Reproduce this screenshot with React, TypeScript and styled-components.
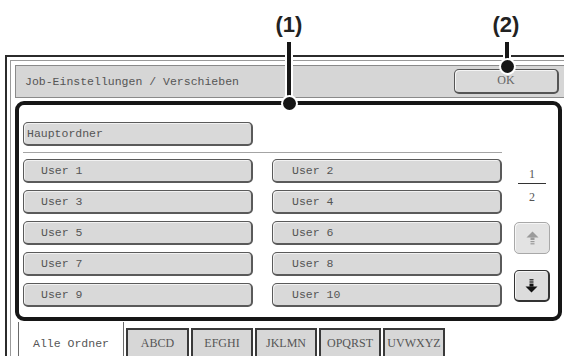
import React from "react";
import styled, { createGlobalStyle } from "styled-components";

const Global = createGlobalStyle`
  html, body { margin: 0; padding: 0; background: #fff; overflow: hidden; }
  * { box-sizing: border-box; }
`;

const MONO = `"Liberation Mono", "DejaVu Sans Mono", monospace`;
const SERIF = `"Liberation Serif", "DejaVu Serif", serif`;

const Page = styled.div`
  position: relative;
  width: 564px;
  height: 356px;
  overflow: hidden;
  background: #fff;
`;

const Frame = styled.div`
  margin: 55px 0 0 5px;
  width: 575px;
  height: 301px;
  border-top: 2px solid #2b2b2b;
  border-left: 2px solid #2b2b2b;
  padding: 3px 0 0 3px;
`;

const Inner = styled.div`
  height: 100%;
  border-top: 1px solid #9a9a9a;
  border-left: 1px solid #9a9a9a;
  padding: 4px 0 0 4px;
  display: flex;
  flex-direction: column;
`;

const TitleBar = styled.div`
  width: 551px;
  height: 33px;
  flex: none;
  background: #d6d6d6;
  border: 1px solid #8a8a8a;
  display: flex;
  align-items: center;
  justify-content: space-between;
  padding: 0 6px 0 9px;
`;

const TitleText = styled.span`
  font-family: ${MONO};
  font-size: 11.5px;
  color: #555;
`;

const OkButton = styled.div`
  width: 105px;
  height: 25px;
  margin-top: -1px;
  border: 1px solid #555;
  border-right-width: 2px;
  border-bottom-width: 2px;
  border-radius: 5px;
  background: #d9d9d9;
  box-shadow: inset 1px 1px 0 #f4f4f4;
  display: flex;
  align-items: center;
  justify-content: center;
  font-family: ${SERIF};
  font-size: 12px;
  color: #666;
`;

const Panel = styled.div`
  width: 547px;
  height: 220px;
  flex: none;
  margin-top: 3px;
  border: 4px solid #161616;
  border-radius: 9px;
  padding: 17px 0 0 4px;
  display: flex;
  align-items: flex-start;
`;

const MainColumn = styled.div`
  width: 479px;
  display: flex;
  flex-direction: column;
`;

const FolderButton = styled.div<{ $pad: number }>`
  width: 230px;
  height: 24px;
  border: 1px solid #5a5a5a;
  border-right-width: 2px;
  border-bottom-width: 2px;
  border-radius: 5px;
  background: #d9d9d9;
  box-shadow: inset 1px 1px 0 #f2f2f2;
  display: flex;
  align-items: center;
  padding-left: ${(p) => p.$pad}px;
  font-family: ${MONO};
  font-size: 11.5px;
  color: #555;
  white-space: nowrap;
`;

const Separator = styled.div`
  height: 1px;
  margin-top: 6px;
  background: #a4a4a4;
`;

const Grid = styled.div`
  margin-top: 6px;
  display: grid;
  grid-template-columns: 230px 230px;
  grid-auto-rows: 24px;
  column-gap: 19px;
  row-gap: 7px;
`;

const SideColumn = styled.div`
  width: 36px;
  margin-left: 12px;
  display: flex;
  flex-direction: column;
  align-items: center;
`;

const PageNum = styled.div<{ $top: number }>`
  margin-top: ${(p) => p.$top}px;
  height: 14px;
  line-height: 14px;
  font-family: ${SERIF};
  font-size: 12px;
  color: #555;
`;

const PageRule = styled.div`
  width: 28px;
  height: 1px;
  margin-top: 2px;
  background: #333;
`;

const ScrollButton = styled.div<{ $disabled?: boolean; $top: number }>`
  width: 36px;
  height: 32px;
  margin-top: ${(p) => p.$top}px;
  border-radius: 5px;
  border: 1px solid ${(p) => (p.$disabled ? "#a8a8a8" : "#333")};
  border-right-width: ${(p) => (p.$disabled ? 1 : 2)}px;
  border-bottom-width: ${(p) => (p.$disabled ? 1 : 2)}px;
  background: ${(p) => (p.$disabled ? "#e3e3e3" : "#dcdcdc")};
  box-shadow: inset 1px 1px 0 #f6f6f6;
  display: flex;
  align-items: center;
  justify-content: center;
  color: ${(p) => (p.$disabled ? "#9a9a9a" : "#111")};
`;

const Tabs = styled.div`
  display: flex;
  align-items: flex-start;
  margin-left: 3px;
  gap: 2px;
`;

const ActiveTab = styled.div`
  width: 106px;
  height: 40px;
  margin-top: 1px;
  background: #fff;
  border: 1px solid #6a6a6a;
  border-top: none;
  border-radius: 0 0 5px 5px;
  padding-top: 15px;
  text-align: center;
  font-family: ${MONO};
  font-size: 11.5px;
  color: #555;
`;

const Tab = styled.div<{ $w: number }>`
  width: ${(p) => p.$w}px;
  height: 34px;
  margin-top: 7px;
  background: #d7d7d7;
  border: 2px solid #3a3a3a;
  border-bottom: none;
  padding-top: 6px;
  text-align: center;
  font-family: ${SERIF};
  font-size: 12px;
  color: #555;
`;

const CalloutLabel = styled.div<{ $x: number }>`
  position: absolute;
  left: ${(p) => p.$x - 30}px;
  top: 13px;
  width: 60px;
  text-align: center;
  font-family: "Liberation Sans", Arial, sans-serif;
  font-weight: bold;
  font-size: 22px;
  line-height: 24px;
  color: #222;
`;

const Leader = styled.div<{ $x: number; $bottom: number }>`
  position: absolute;
  left: ${(p) => p.$x - 2}px;
  top: 42px;
  width: 4px;
  height: ${(p) => p.$bottom - 42}px;
  background: #161616;
  box-shadow: 0 0 0 2px #fff;
`;

const Dot = styled.div<{ $x: number; $y: number }>`
  position: absolute;
  left: ${(p) => p.$x - 6.5}px;
  top: ${(p) => p.$y - 6.5}px;
  width: 13px;
  height: 13px;
  border-radius: 50%;
  background: #161616;
  box-shadow: 0 0 0 2px #fff;
`;

const UpArrow = () => (
  <svg width="13" height="14" viewBox="0 0 13 14">
    <polygon points="0.5,6.5 6.5,0.5 12.5,6.5" fill="currentColor" />
    <rect x="4.5" y="6.5" width="4" height="2.5" fill="currentColor" />
    <rect x="4.5" y="10" width="4" height="1.2" fill="currentColor" />
    <rect x="4.5" y="12.2" width="4" height="1.2" fill="currentColor" />
  </svg>
);

const DownArrow = () => (
  <svg width="13" height="14" viewBox="0 0 13 14">
    <rect x="4.5" y="0.2" width="4" height="1.2" fill="currentColor" />
    <rect x="4.5" y="2.4" width="4" height="1.2" fill="currentColor" />
    <rect x="4.5" y="4.6" width="4" height="3" fill="currentColor" />
    <polygon points="0.5,7.5 12.5,7.5 6.5,13.5" fill="currentColor" />
  </svg>
);

const users = Array.from({ length: 10 }, (_, i) => `User ${i + 1}`);
const tabs: [string, number][] = [
  ["ABCD", 63],
  ["EFGHI", 62],
  ["JKLMN", 62],
  ["OPQRST", 62],
  ["UVWXYZ", 62],
];

export default function App() {
  return (
    <Page>
      <Global />
      <Frame>
        <Inner>
          <TitleBar>
            <TitleText>Job-Einstellungen / Verschieben</TitleText>
            <OkButton>OK</OkButton>
          </TitleBar>
          <Panel>
            <MainColumn>
              <FolderButton $pad={3}>Hauptordner</FolderButton>
              <Separator />
              <Grid>
                {users.map((u, i) => (
                  <FolderButton key={u} $pad={i % 2 === 0 ? 17 : 19}>
                    {u}
                  </FolderButton>
                ))}
              </Grid>
            </MainColumn>
            <SideColumn>
              <PageNum $top={45}>1</PageNum>
              <PageRule />
              <PageNum $top={6}>2</PageNum>
              <ScrollButton $disabled $top={18}>
                <UpArrow />
              </ScrollButton>
              <ScrollButton $top={16}>
                <DownArrow />
              </ScrollButton>
            </SideColumn>
          </Panel>
          <Tabs>
            <ActiveTab>Alle Ordner</ActiveTab>
            {tabs.map(([t, w]) => (
              <Tab key={t} $w={w}>
                {t}
              </Tab>
            ))}
          </Tabs>
        </Inner>
      </Frame>
      <CalloutLabel $x={289}>(1)</CalloutLabel>
      <Leader $x={289} $bottom={103} />
      <Dot $x={289} $y={103} />
      <CalloutLabel $x={506}>(2)</CalloutLabel>
      <Leader $x={507} $bottom={66} />
      <Dot $x={507} $y={66} />
    </Page>
  );
}
